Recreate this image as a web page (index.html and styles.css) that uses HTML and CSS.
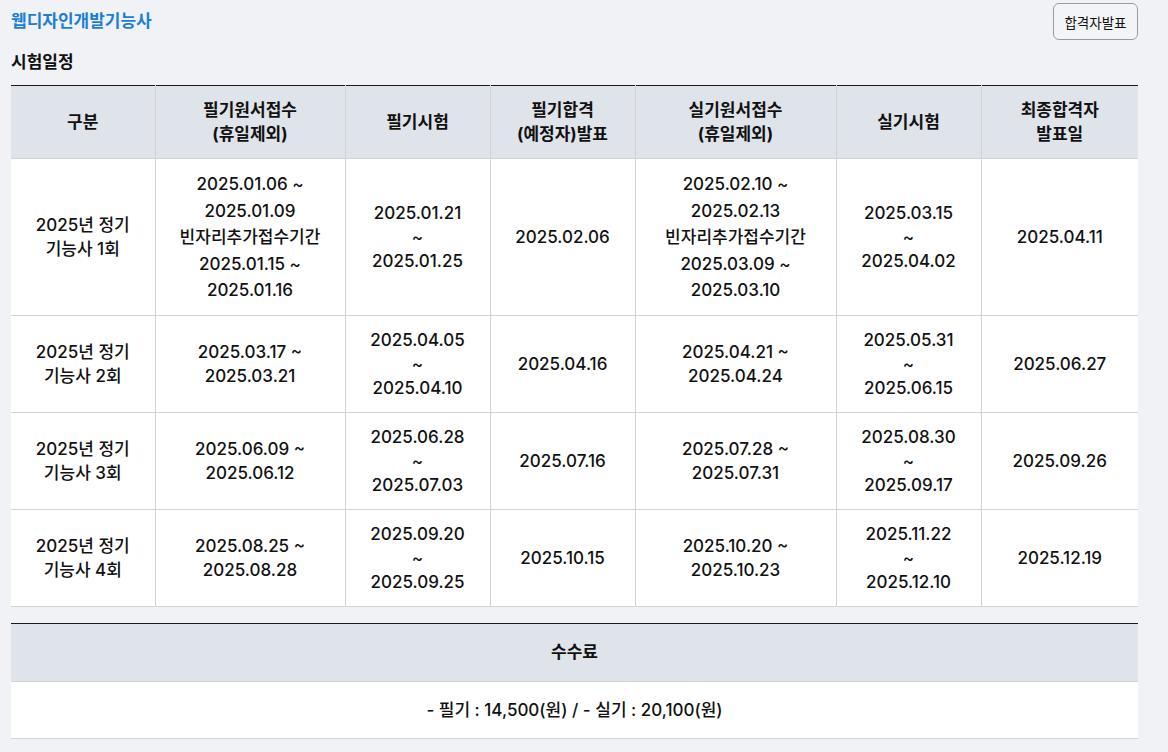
FILE: index.html
```html
<!DOCTYPE html>
<html lang="ko">
<head>
<meta charset="utf-8">
<title>웹디자인개발기능사</title>
<link rel="stylesheet" href="styles.css">
</head>
<body>
<div class="page">
  <header class="topbar">
    <h1 class="title">웹디자인개발기능사</h1>
    <button class="btn">합격자발표</button>
  </header>
  <h2 class="section-title">시험일정</h2>
  <table class="tbl schedule">
    <colgroup>
      <col style="width:144px"><col style="width:190px"><col style="width:145px"><col style="width:145px"><col style="width:201px"><col style="width:145px"><col style="width:157px">
    </colgroup>
    <thead>
      <tr>
        <th>구분</th>
        <th>필기원서접수<br>(휴일제외)</th>
        <th>필기시험</th>
        <th>필기합격<br>(예정자)발표</th>
        <th>실기원서접수<br>(휴일제외)</th>
        <th>실기시험</th>
        <th>최종합격자<br>발표일</th>
      </tr>
    </thead>
    <tbody>
      <tr class="tall">
        <td>2025년 정기<br>기능사 1회</td>
        <td class="multi">2025.01.06 ~<br>2025.01.09<br>빈자리추가접수기간<br>2025.01.15 ~<br>2025.01.16</td>
        <td>2025.01.21<br>~<br>2025.01.25</td>
        <td>2025.02.06</td>
        <td class="multi">2025.02.10 ~<br>2025.02.13<br>빈자리추가접수기간<br>2025.03.09 ~<br>2025.03.10</td>
        <td>2025.03.15<br>~<br>2025.04.02</td>
        <td>2025.04.11</td>
      </tr>
      <tr>
        <td>2025년 정기<br>기능사 2회</td>
        <td>2025.03.17 ~<br>2025.03.21</td>
        <td>2025.04.05<br>~<br>2025.04.10</td>
        <td>2025.04.16</td>
        <td>2025.04.21 ~<br>2025.04.24</td>
        <td>2025.05.31<br>~<br>2025.06.15</td>
        <td>2025.06.27</td>
      </tr>
      <tr>
        <td>2025년 정기<br>기능사 3회</td>
        <td>2025.06.09 ~<br>2025.06.12</td>
        <td>2025.06.28<br>~<br>2025.07.03</td>
        <td>2025.07.16</td>
        <td>2025.07.28 ~<br>2025.07.31</td>
        <td>2025.08.30<br>~<br>2025.09.17</td>
        <td>2025.09.26</td>
      </tr>
      <tr>
        <td>2025년 정기<br>기능사 4회</td>
        <td>2025.08.25 ~<br>2025.08.28</td>
        <td>2025.09.20<br>~<br>2025.09.25</td>
        <td>2025.10.15</td>
        <td>2025.10.20 ~<br>2025.10.23</td>
        <td>2025.11.22<br>~<br>2025.12.10</td>
        <td>2025.12.19</td>
      </tr>
    </tbody>
  </table>
  <table class="tbl fee">
    <thead>
      <tr><th>수수료</th></tr>
    </thead>
    <tbody>
      <tr><td>- 필기 : 14,500(원) / - 실기 : 20,100(원)</td></tr>
    </tbody>
  </table>
</div>
</body>
</html>
```

FILE: styles.css
```css
* { box-sizing: border-box; }
html, body {
  margin: 0;
  padding: 0;
  background: #f1f2f6;
}
body {
  font-family: Inter, "Noto Sans CJK KR", "Noto Sans", sans-serif;
  color: #111;
  font-size: 17px;
}
.page {
  width: 1138px;
  padding: 3px 0 14px 11px;
}
.topbar {
  display: flex;
  justify-content: space-between;
  align-items: center;
  height: 37px;
}
.title {
  margin: 0;
  font-size: 17px;
  font-weight: 700;
  color: #1d7ed6;
  line-height: 24px;
  margin-top: -2px;
}
.btn {
  height: 37px;
  width: 85px;
  padding: 0;
  border: 1px solid #9a9a9a;
  border-radius: 6px;
  background: #f3f4f7;
  font-family: Inter, "Noto Sans CJK KR", sans-serif;
  font-size: 13.5px;
  color: #111;
}
.section-title {
  margin: 10px 0 0;
  font-size: 17px;
  font-weight: 700;
  line-height: 24px;
  color: #111;
}
.tbl {
  width: 1127px;
  border-collapse: collapse;
  table-layout: fixed;
  border-top: 1px solid #1b1b1b;
  background: #fff;
}
.schedule { margin-top: 11px; }
.fee { margin-top: 16px; }
.tbl th {
  background: #dfe3ea;
  font-weight: 700;
  line-height: 24px;
  padding: 12px 6px;
  text-align: center;
  color: #111;
}
.tbl td {
  line-height: 24px;
  padding: 12px 6px;
  text-align: center;
  color: #111;
  font-weight: 500;
}
.tbl th, .tbl td {
  border-bottom: 1px solid #d3d3d6;
  border-left: 1px solid #d3d3d6;
  vertical-align: middle;
}
.tbl th:first-child, .tbl td:first-child { border-left: none; }
.schedule tr.tall td { padding: 12px 6px 11px; }
.schedule td.multi { line-height: 26.5px; }
.fee th { padding: 16px 8px 17px; }
.fee td { padding: 16px 8px; }
```
